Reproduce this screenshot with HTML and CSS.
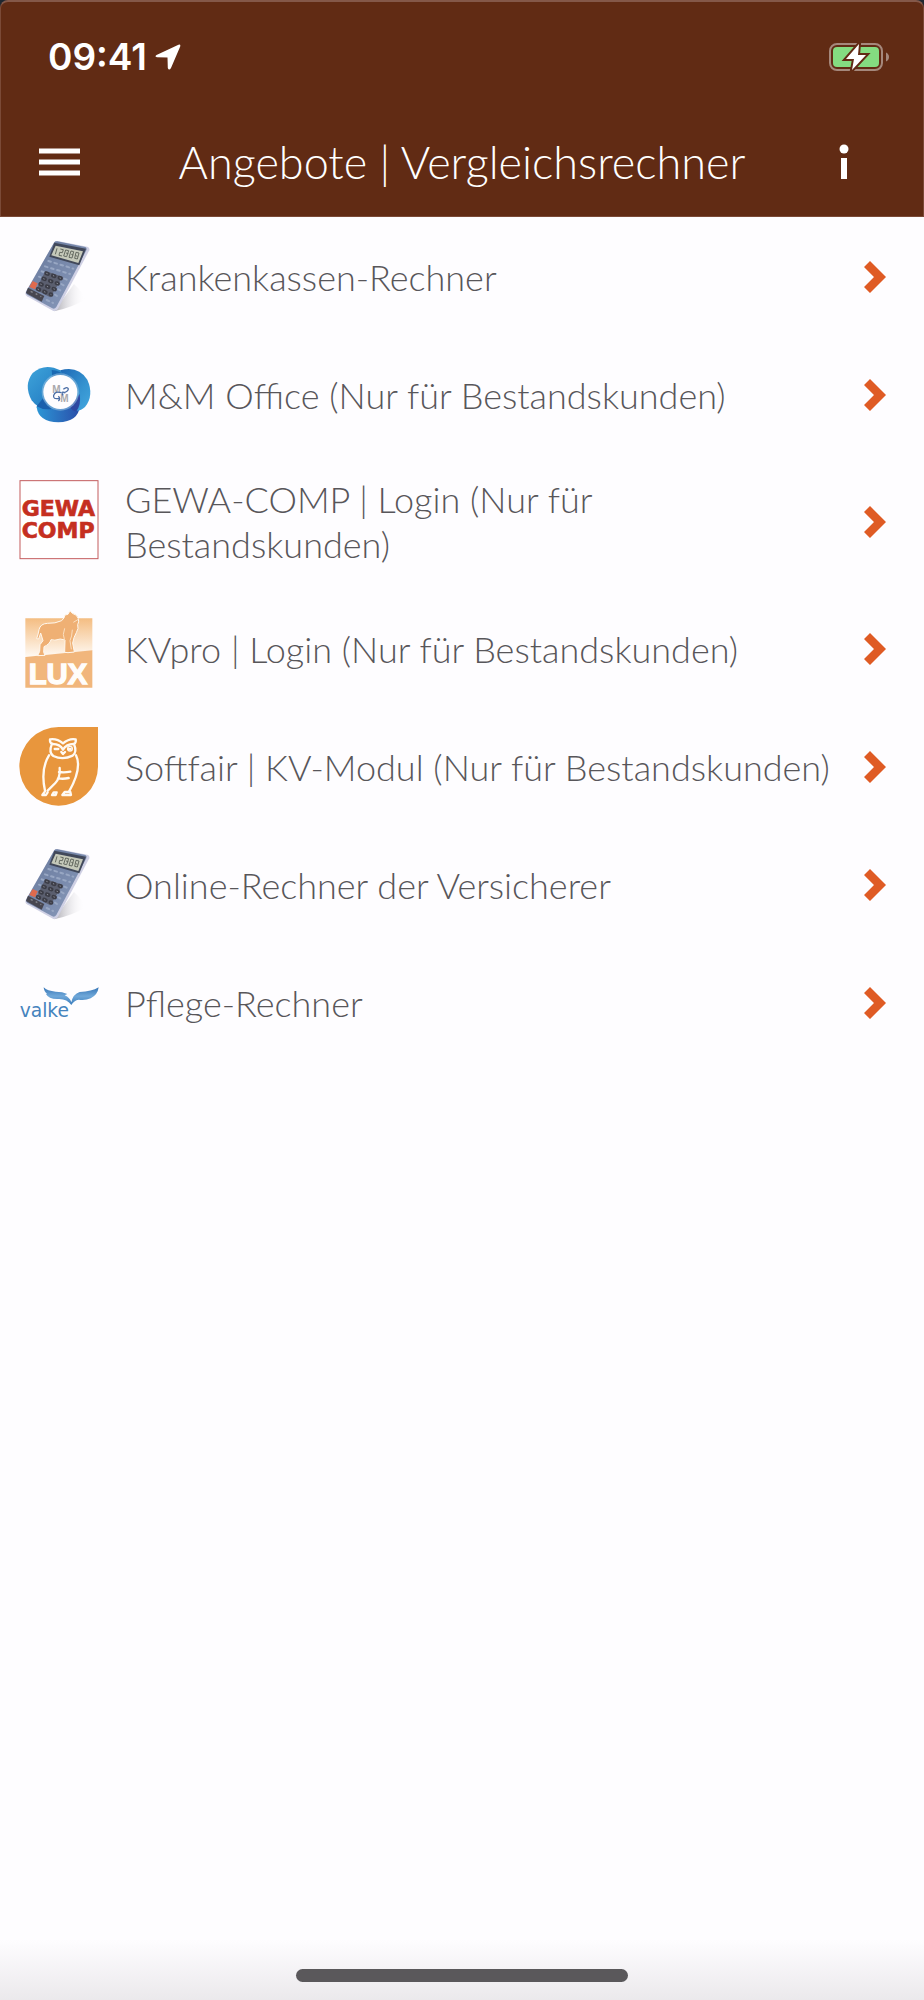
FILE: index.html
```html
<!DOCTYPE html>
<html lang="de">
<head>
<meta charset="utf-8">
<meta name="viewport" content="width=device-width, initial-scale=1">
<title>Angebote | Vergleichsrechner</title>
<link rel="stylesheet" href="styles.css">
</head>
<body>
<svg class="defs" width="0" height="0" aria-hidden="true">
  <defs>
    <linearGradient id="calcBody" x1="0" y1="0" x2="1" y2="1"><stop offset="0" stop-color="#66779a"/><stop offset="1" stop-color="#8b9cbd"/></linearGradient>
    <linearGradient id="calcShade" x1="0" y1="0" x2="1" y2="0"><stop offset="0" stop-color="#aaa9b0"/><stop offset="1" stop-color="#fefdff" stop-opacity="0"/></linearGradient>
    <symbol id="calculator" viewBox="27 21 240 240" overflow="visible">
      <path d="M132 244 192 162Q222 190 226 208Q190 232 132 244Z" fill="url(#calcShade)"/>
      <path d="M133 37Q136 32 143 33L232 50Q240 53 238 61L144 236Q139 245 130 243L51 199Q44 194 47 186Z" fill="#cfd0e4"/>
      <path d="M132 38Q135 33 142 34L226 51Q232 54 229 61L139 231Q134 238 127 235L52 194Q46 191 49 184Z" fill="url(#calcBody)"/>
      <path d="M133 38 228 56 208 106 118 80Z" fill="#41485a"/>
      <path d="M137 47 219 64 205 99 124 76Z" fill="#c5c9ba"/>
      <g fill="none" stroke="#666b62" stroke-width="3">
        <path d="M141 55 136 73M151 57l9 2-3 9-8-1-2 9 9 2M167 60l9 2-6 18-9-2zM183 63l8 2-5 19-9-2zM198 67l9 2-5 18-8-2zM168 69l7 2M184 73l6 2M197 77l6 2"/>
      </g>
      <g fill="none" stroke="#98a7c3" stroke-width="6" stroke-linecap="round" stroke-dasharray="8 11">
        <path d="M115 93 190 116M105 109 180 132M95 124 100 126M163 146 170 149M87 140 92 142M154 162 161 166M145 178 151 181M135 194 141 198M110 210 129 219"/>
      </g>
      <path d="M106 123 158 140 121 202 78 180Z" fill="#5b5f6f"/>
      <g fill="none" stroke="#3c3d47" stroke-width="12" stroke-linecap="round" stroke-dasharray="5 16">
        <path d="M109 130 153 145M100 146 144 161M91 162 135 178M83 177 124 194"/>
      </g>
      <g fill="none" stroke="#8f919a" stroke-width="3" stroke-dasharray="4 17"><path d="M109 130 153 145M100 146 144 161M91 162 135 178M83 177 124 194"/></g>
      <path d="M68 153 83 160 75 178 58 171Z" fill="#df6a4d"/>
      <path d="M54 173 103 198 95 215 48 189Z" fill="#474650"/>
      <path d="M62 184 68 187M77 191 82 194M91 199 94 200" stroke="#85858c" stroke-width="4"/>
    </symbol>
    <symbol id="chevron" viewBox="0 0 22 34"><path d="M6 1 22 17 6 33 0 27 10 17 0 7Z" fill="#df5b24"/></symbol>
  </defs>
</svg>

<div class="screen">
  <header class="header">
    <div class="status">
      <span class="clock">09:41</span>
      <svg class="location" viewBox="0 0 26 26" aria-hidden="true"><path d="M1.5 11 23.500.8Q25.800 0 25.200 2.500L16 24Q14 27 12.800 24L12.500 13.500 2 13.200Q-.8 12.500 1.500 11Z" fill="#fff"/></svg>
      <svg class="battery" viewBox="0 0 60 30" aria-hidden="true">
        <rect x="1" y="2" width="52" height="26" rx="7" fill="none" stroke="#a5887c" stroke-width="2"/>
        <rect x="4" y="5" width="46" height="20" rx="4" fill="#84dc81"/>
        <path d="M57 10.500Q60 12 60 15T57 19.500Z" fill="#a5887c"/>
        <path d="M30 2 17 17H25L23 28 37 13H29Z" fill="#fff" stroke="#612b14" stroke-width="4"/>
        <path d="M30 2 17 17H25L23 28 37 13H29Z" fill="#fff"/>
      </svg>
    </div>
    <div class="navbar">
      <button class="nav-button" type="button" aria-label="Menü">
        <svg class="menu-icon" viewBox="0 0 41 28"><path d="M0 3H41M0 14H41M0 25H41" stroke="#fff" stroke-width="5"/></svg>
      </button>
      <h1 class="title">Angebote | Vergleichsrechner</h1>
      <button class="nav-button nav-button-info" type="button" aria-label="Information">
        <svg class="info-icon" viewBox="0 0 10 36"><circle cx="5" cy="5" r="4.500" fill="#fff"/><path d="M2 14H8V35H2Z" fill="#fff"/></svg>
      </button>
    </div>
  </header>

  <main>
    <ul class="list">
      <li><a class="row" href="#krankenkassen">
        <svg class="logo" viewBox="0 0 80 80" aria-hidden="true"><use href="#calculator" width="80" height="80"/></svg>
        <span class="label">Krankenkassen-Rechner</span>
        <svg class="chevron" aria-hidden="true"><use href="#chevron"/></svg>
      </a></li>
      <li><a class="row" href="#mm-office">
        <svg class="logo" viewBox="27 15 240 240" aria-hidden="true">
          <defs>
            <linearGradient id="mmLeft" x1="0" y1="0" x2="1" y2="1"><stop offset="0" stop-color="#3fa4da"/><stop offset="1" stop-color="#1a70bc"/></linearGradient>
            <linearGradient id="mmRight" x1="0" y1="0" x2="1" y2="1"><stop offset="0" stop-color="#1c66b4"/><stop offset=".6" stop-color="#3593d0"/><stop offset="1" stop-color="#43a7df"/></linearGradient>
            <linearGradient id="mmBottom" x1="0" y1="0" x2="1" y2="0"><stop offset="0" stop-color="#2c96d6"/><stop offset="1" stop-color="#2a4faa"/></linearGradient>
          </defs>
          <path d="M80 172Q86 216 145 217 205 214 209 170L199 90H95Z" fill="url(#mmBottom)"/>
          <path d="M151 61Q204 46 232 89 253 136 225 171 205 190 182 176L145 100Z" fill="url(#mmRight)"/>
          <path d="M151 61Q104 37 68 69 40 106 65 151 86 181 125 177L169 95Z" fill="url(#mmLeft)"/>
          <path d="M125 60Q150 62 164 78L128 92Z" fill="#1a69b3"/>
          <path d="M80 169Q99 181 125 177L99 145Z" fill="#1a60ad"/>
          <path d="M209 132Q214 164 199 184 186 182 177 170Z" fill="#2d48a2"/>
          <circle cx="151" cy="126" r="56" fill="#8fbde0" opacity=".6"/>
          <circle cx="151" cy="126" r="51" fill="#fefdff"/>
          <g class="mm-text"><text x="127" y="128">M</text><text x="151" y="157">M</text></g>
          <path d="M160 118Q172 108 175 117 174 126 159 128M154 128Q135 122 131 136 128 149 147 145M159 136Q151 121 166 129M145 139Q153 147 145 153" fill="none" stroke="#4a6da5" stroke-width="4"/>
        </svg>
        <span class="label">M&amp;M Office (Nur für Bestandskunden)</span>
        <svg class="chevron" aria-hidden="true"><use href="#chevron"/></svg>
      </a></li>
      <li><a class="row" href="#gewa-comp">
        <svg class="logo" viewBox="27 33 240 240" aria-hidden="true">
          <rect x="30" y="29" width="234" height="234" fill="#fff" stroke="#c35c5d" stroke-width="3"/>
          <g class="gewa-text"><text x="35" y="136">GEWA</text><text x="35" y="202">COMP</text></g>
        </svg>
        <span class="label">GEWA-COMP | Login (Nur für Bestandskunden)</span>
        <svg class="chevron" aria-hidden="true"><use href="#chevron"/></svg>
      </a></li>
      <li><a class="row" href="#kvpro">
        <svg class="logo" viewBox="27 24 240 240" aria-hidden="true">
          <defs><linearGradient id="luxSky" x1="0" y1="0" x2="0" y2="1"><stop offset="0" stop-color="#f4bd82"/><stop offset="1" stop-color="#fffaf4"/></linearGradient></defs>
          <path d="M46 52H247V150L46 168Z" fill="url(#luxSky)"/>
          <path d="M46 168Q150 158 247 148V260H46Z" fill="#f1b67c"/>
          <path d="M80 113Q85 99 87 86 91 68 112 67 136 68 155 59 164 51 165 42L174 40 180 29 187 37Q201 40 205 53 208 63 203 71 207 82 199 95 191 108 188 126L192 148 193 153 174 155 164 154 165 117 151 114Q132 120 123 116 119 130 102 137L101 154 105 163 83 164 89 151 90 131 99 119 92 96 86 114Z" fill="#efb074" stroke="#fff8ee" stroke-width="3" stroke-linejoin="round"/>
          <path d="M164 82Q156 100 164 119M187 86Q186 107 180 119L184 145M205 55 190 64" fill="none" stroke="#fbe0c1" stroke-width="3"/>
          <text class="lux-text" x="56" y="250">LUX</text>
        </svg>
        <span class="label">KVpro | Login (Nur für Bestandskunden)</span>
        <svg class="chevron" aria-hidden="true"><use href="#chevron"/></svg>
      </a></li>
      <li><a class="row" href="#softfair">
        <svg class="logo" viewBox="27 33 240 240" aria-hidden="true">
          <path d="M146 33H264V152A118 118 0 1 1 146 33Z" fill="#e8963d"/>
          <g fill="none" stroke="#fffaf3" stroke-width="7" stroke-linecap="round" stroke-linejoin="round">
            <path d="M120 70Q119 80 126 83 115 110 130 120 158 133 188 119 202 109 192 84 199 80 197 70 178 66 159 82 141 67 120 70Z"/>
            <path d="M128 84Q150 84 159 101 169 84 191 84M154 108 159 114 165 108M134 99H145M174 99H182"/>
            <circle cx="180" cy="98" r="7" stroke-width="4"/>
            <path d="M117 118Q91 160 105 224M198 118Q217 157 177 227M149 156Q151 187 136 201L113 224M147 168Q162 171 181 167M144 187Q160 190 176 186"/>
            <path d="M105 226 97 237H108L113 229M131 229 126 237H137L140 229ZM164 228 157 237H183L181 228Z"/>
          </g>
        </svg>
        <span class="label">Softfair | KV-Modul (Nur für Bestandskunden)</span>
        <svg class="chevron" aria-hidden="true"><use href="#chevron"/></svg>
      </a></li>
      <li><a class="row" href="#online-rechner">
        <svg class="logo" viewBox="0 0 80 80" aria-hidden="true"><use href="#calculator" width="80" height="80"/></svg>
        <span class="label">Online-Rechner der Versicherer</span>
        <svg class="chevron" aria-hidden="true"><use href="#chevron"/></svg>
      </a></li>
      <li><a class="row" href="#pflege">
        <svg class="logo" viewBox="27 -21 240 240" aria-hidden="true">
          <defs><linearGradient id="wing" x1="0" y1="0" x2="0" y2="1"><stop offset="0" stop-color="#3675b6"/><stop offset=".5" stop-color="#70a8d9"/><stop offset="1" stop-color="#397bbb"/></linearGradient></defs>
          <path d="M101 52Q112 63 137 65 158 65 172 72L164 76Q180 83 184 97 189 72 209 66 245 65 266 52 263 75 242 85 226 92 206 89 192 91 184 105 171 86 145 87 116 88 108 72L111 71Q102 65 101 52Z" fill="url(#wing)"/>
          <text class="valke-text" x="29" y="140">valke</text>
        </svg>
        <span class="label">Pflege-Rechner</span>
        <svg class="chevron" aria-hidden="true"><use href="#chevron"/></svg>
      </a></li>
    </ul>
  </main>

  <footer class="home"><div class="home-bar"></div></footer>
</div>
</body>
</html>
```
FILE: styles.css
```css
* { box-sizing: border-box; }

body {
  margin: 0;
  background: #fefdff;
  font-family: Lato, "Open Sans", sans-serif;
  font-weight: 300;
}

.defs { position: absolute; }

.screen {
  display: flex;
  flex-direction: column;
  min-height: 100vh;
  background: #1f2730;
}

.header {
  padding-top: 30px;
  background: #612b14;
  border: 1px solid #7b4a37;
  border-top: 2px solid #845849;
  border-radius: 8px 8px 0 0;
  color: #fff;
}

.status {
  display: flex;
  align-items: center;
  height: 50px;
  padding: 0 34px 0 47px;
}

.clock {
  font: 600 37px/50px Inter, sans-serif;
}

.location {
  width: 26px;
  height: 26px;
  margin-left: 8px;
}

.battery {
  width: 60px;
  height: 30px;
  margin-left: auto;
}

.navbar {
  display: grid;
  grid-template-columns: 84px 1fr 84px;
  align-items: center;
  height: 134px;
  padding: 26px 36px 0;
}

.nav-button {
  display: flex;
  align-items: center;
  height: 64px;
  padding: 0 2px;
  background: none;
  border: 0;
}

.nav-button-info { justify-content: flex-end; padding-right: 38px; }
.menu-icon { width: 41px; height: 28px; }
.info-icon { width: 10px; height: 36px; }

.title {
  margin: 0;
  font-size: 45px;
  font-weight: 300;
  line-height: 56px;
  text-align: center;
  white-space: nowrap;
}

main { flex: 1; background: #fefdff; }

.list {
  margin: 0;
  padding: 1px 0 0;
  list-style: none;
}

.row {
  display: flex;
  align-items: center;
  min-height: 118px;
  padding: 23px 38px 23px 19px;
  color: #58565a;
  text-decoration: none;
}

.logo {
  flex: none;
  width: 80px;
  height: 80px;
  margin: -4px 26px -4px 0;
  overflow: visible;
}

.label {
  flex: 1;
  font-size: 36px;
  line-height: 45px;
}

.chevron {
  flex: none;
  width: 22px;
  height: 34px;
}

.mm-text { font: 700 30px "Liberation Sans", sans-serif; fill: #a9a8ac; }
.gewa-text { font: 700 66px "DejaVu Sans", sans-serif; fill: #c52f20; stroke: #c52f20; stroke-width: 2; }
.lux-text { font: 700 88px "Liberation Sans", sans-serif; fill: #fffdfb; stroke: #fffdfb; stroke-width: 4; }
.valke-text { font: 400 56px "DejaVu Sans", sans-serif; fill: #4583bd; }

.home {
  display: flex;
  justify-content: center;
  padding: 29px 0 18px;
  background: linear-gradient(#fefdff, #ebe9ec);
}

.home-bar {
  width: 36%;
  height: 13px;
  border-radius: 7px;
  background: #5a585b;
}
```
